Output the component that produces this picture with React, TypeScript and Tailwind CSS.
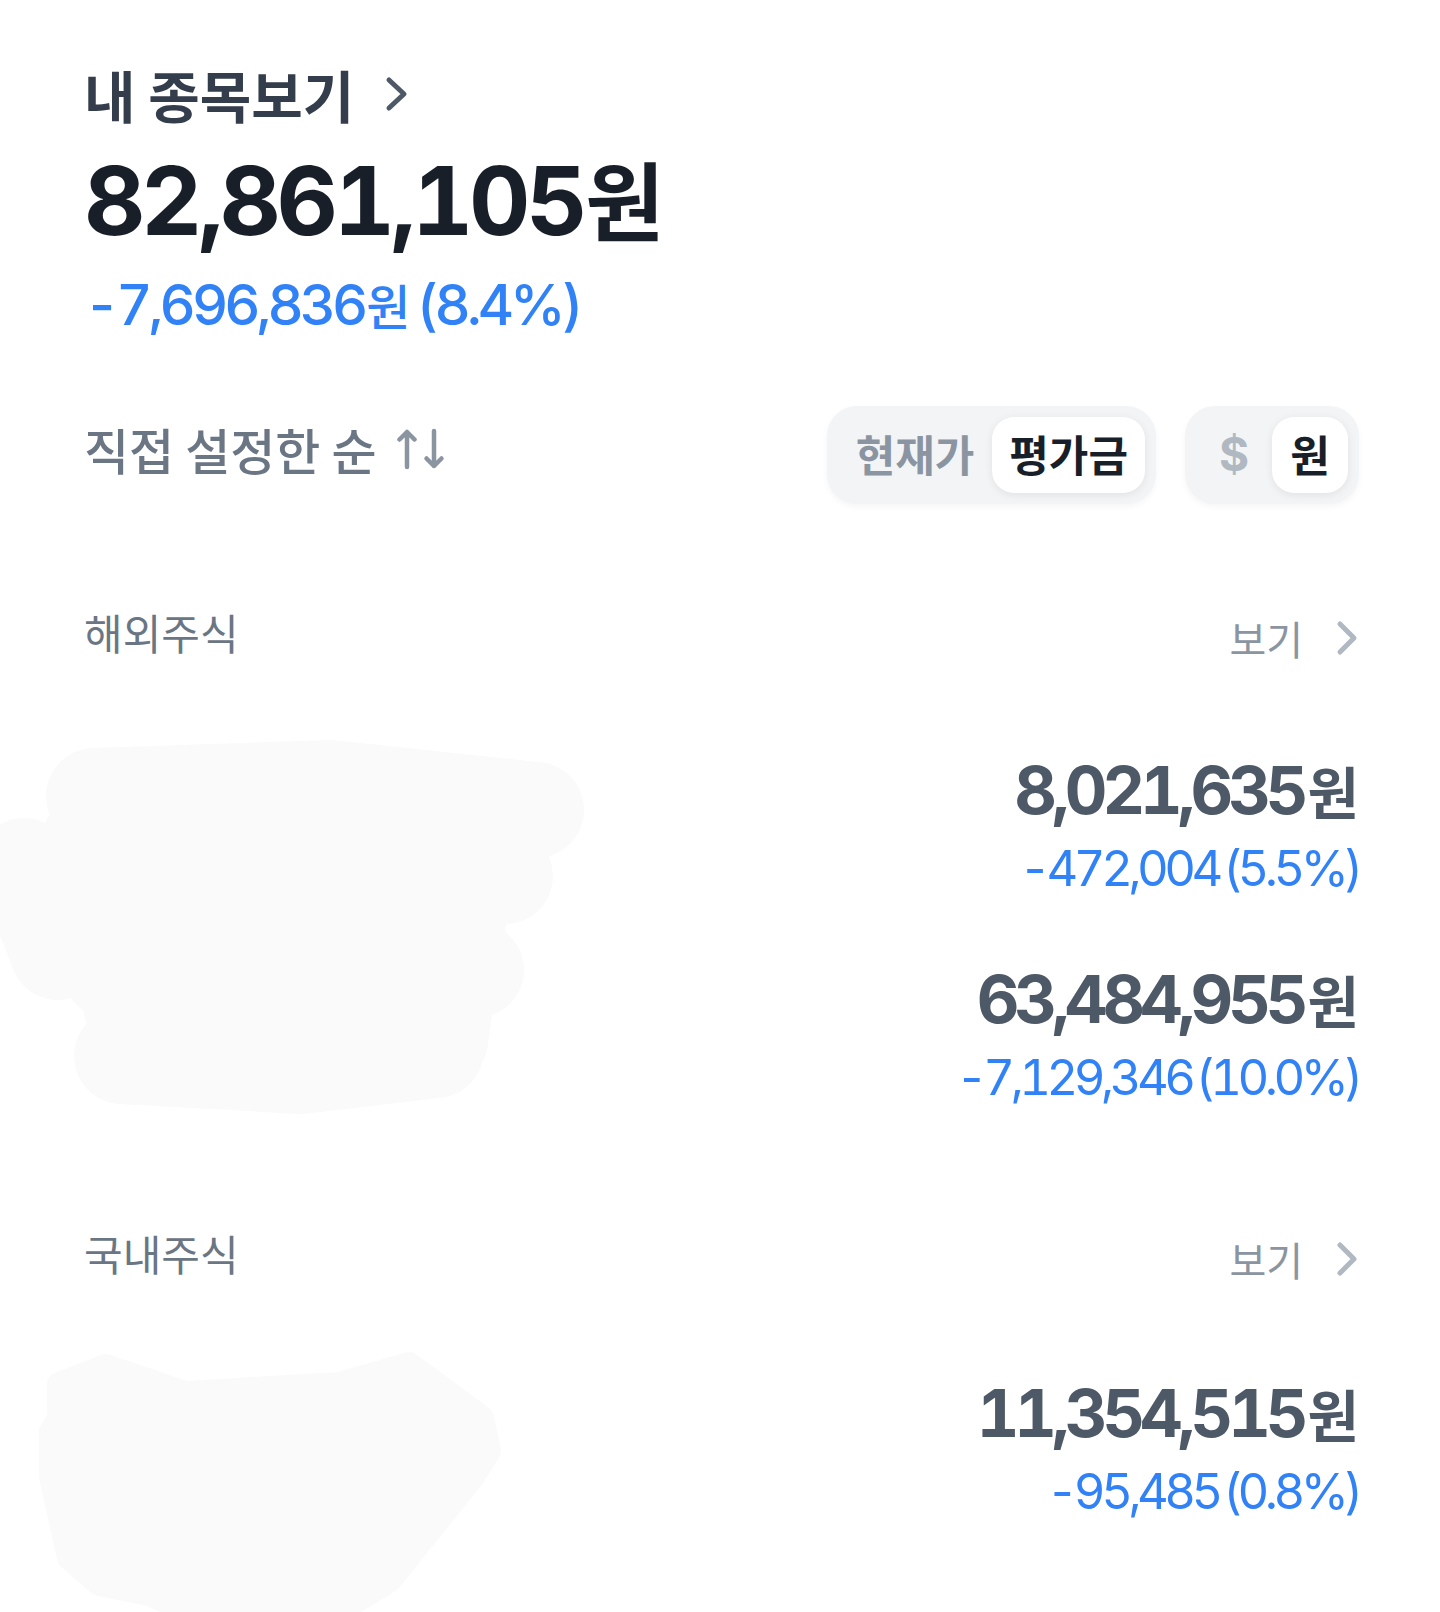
import React from "react";

const num = "font-['Inter','Noto_Sans_CJK_KR',sans-serif] tabular-nums";
const kr = "font-['Noto_Sans_CJK_KR','Noto_Sans',sans-serif]";

function Chevron({ className }: { className?: string }) {
  return (
    <svg
      viewBox="0 0 24 38"
      className={className}
      fill="none"
      stroke="currentColor"
      strokeWidth={5}
      strokeLinecap="round"
      strokeLinejoin="round"
    >
      <path d="M5 5 L19 19 L5 33" />
    </svg>
  );
}

function SortArrows() {
  return (
    <svg
      viewBox="0 0 48 42"
      className="h-[42px] w-[48px] text-[#8b95a1]"
      fill="none"
      stroke="currentColor"
      strokeWidth={4.5}
      strokeLinecap="round"
      strokeLinejoin="round"
    >
      <path d="M10 39 V4 M2.5 11.5 L10 4 L17.5 11.5" />
      <path d="M37 3 V38 M29.5 30.5 L37 38 L44.5 30.5" />
    </svg>
  );
}

// redaction scribbles over the stock names
function ScribbleTop() {
  return (
    <svg
      viewBox="0 0 600 400"
      className="pointer-events-none absolute left-0 top-[740px] h-[400px] w-[600px]"
      fill="none"
      stroke="#fafafa"
      strokeWidth={96}
      strokeLinecap="round"
      strokeLinejoin="round"
    >
      <path d="M90 100 L470 100 L440 300 L140 300 Z" fill="#fafafa" />
      <path d="M94 56 L330 48 L536 70" />
      <path d="M74 140 L300 132 L505 136" />
      <path d="M24 126 L58 212" />
      <path d="M112 232 L330 222 L476 230" />
      <path d="M122 316 L300 326 L436 310" />
    </svg>
  );
}

function ScribbleBottom() {
  return (
    <svg
      viewBox="0 0 480 272"
      className="pointer-events-none absolute left-[39px] top-[1351px] h-[272px] w-[480px]"
    >
      <path
        d="M20 33 L67 15 L147 42 L300 33 L370 13 L400 35 L443 67 L450 100 L433 127 L350 230 L317 250 L257 250 L233 270 L173 270 L110 243 L60 233 L30 207 L10 117 L7 90 L20 67 Z"
        fill="#fafafa"
        stroke="#fafafa"
        strokeWidth={24}
        strokeLinejoin="round"
      />
    </svg>
  );
}

function SectionHeader({ label }: { label: string }) {
  return (
    <div className="flex h-[56px] items-start justify-between">
      <span className={`${kr} text-[42px] leading-[56px] text-[#6b7684]`}>{label}</span>
      <div className="mt-[6px] flex items-center gap-[32px]">
        <span className={`${kr} text-[40px] leading-[56px] text-[#8b95a1]`}>보기</span>
        <Chevron className="h-[38px] w-[24px] text-[#b0b8c1]" />
      </div>
    </div>
  );
}

function Holding({ value, change, rate }: { value: string; change: string; rate: string }) {
  return (
    <div className="flex flex-col items-end">
      <div className={`${num} text-[66px] font-bold leading-[76px] tracking-[-5px] text-[#4e5968]`}>
        {value}
        <span className={`${kr} ml-[4px] text-[56px] tracking-normal`}>원</span>
      </div>
      <div className={`${num} mt-[11px] text-[49px] leading-[60px] tracking-[-4.5px] text-[#3182f6]`}>
        {change}
        <span className="ml-[4px]">({rate})</span>
      </div>
    </div>
  );
}

export default function App() {
  return (
    <div className="relative min-h-[1612px] w-full overflow-hidden bg-white pl-[84px] pr-[81px] pt-[64px]">
      <ScribbleTop />
      <ScribbleBottom />

      <div className="relative">
        {/* header */}
        <div className="flex h-[60px] items-center gap-[30px]">
          <span className={`${kr} text-[56px] font-bold leading-[60px] text-[#333d4b]`}>내 종목보기</span>
          <svg
            viewBox="0 0 25 36"
            className="h-[36px] w-[25px] text-[#4e5968]"
            fill="none"
            stroke="currentColor"
            strokeWidth={5}
            strokeLinecap="round"
            strokeLinejoin="round"
          >
            <path d="M5 4 L20 18 L5 32" />
          </svg>
        </div>

        <div className={`${num} mt-[19px] text-[95px] font-bold leading-[110px] tracking-[-4.3px] text-[#191f28]`}>
          82,861,105<span className={`${kr} ml-[2px] text-[86px] tracking-normal`}>원</span>
        </div>
        <div className={`${num} mt-[16px] text-[56px] font-medium leading-[64px] tracking-[-4px] text-[#3182f6]`}>
          -7,696,836<span className={`${kr} ml-[2px] text-[48px] tracking-normal`}>원</span>
          <span className="ml-[6px]">(8.4%)</span>
        </div>

        {/* sort + toggles */}
        <div className="mt-[69px] flex h-[98px] items-center justify-between">
          <div className="-mt-[12px] flex items-center gap-[20px]">
            <span className={`${kr} text-[49px] font-medium leading-[60px] text-[#6b7684]`}>직접 설정한 순</span>
            <SortArrows />
          </div>
          <div className="flex items-center gap-[29px]">
            <div className="flex rounded-[30px] bg-[#f2f4f6] p-[11px] shadow-[0_3px_6px_rgba(0,0,0,0.04)]">
              <div className={`${kr} flex h-[76px] items-center px-[18px] pb-[4px] text-[43px] font-bold text-[#8b95a1]`}>
                현재가
              </div>
              <div
                className={`${kr} flex h-[76px] items-center rounded-[22px] bg-white px-[17px] pb-[4px] text-[43px] font-bold text-[#191f28] shadow-[0_2px_8px_rgba(0,0,0,0.08)]`}
              >
                평가금
              </div>
            </div>
            <div className="flex rounded-[30px] bg-[#f2f4f6] p-[11px] shadow-[0_3px_6px_rgba(0,0,0,0.04)]">
              <div className={`${num} flex h-[76px] w-[76px] items-center justify-center pb-[2px] text-[46px] font-bold text-[#b0b8c1]`}>
                $
              </div>
              <div
                className={`${kr} flex h-[76px] w-[76px] items-center justify-center rounded-[22px] bg-white pb-[4px] text-[43px] font-bold text-[#191f28] shadow-[0_2px_8px_rgba(0,0,0,0.08)]`}
              >
                원
              </div>
            </div>
          </div>
        </div>

        {/* 해외주식 */}
        <div className="mt-[100px]">
          <SectionHeader label="해외주식" />
          <div className="mt-[92px] flex flex-col gap-[62px]">
            <Holding value="8,021,635" change="-472,004" rate="5.5%" />
            <Holding value="63,484,955" change="-7,129,346" rate="10.0%" />
          </div>
        </div>

        {/* 국내주식 */}
        <div className="mt-[117px]">
          <SectionHeader label="국내주식" />
          <div className="mt-[94px] flex flex-col">
            <Holding value="11,354,515" change="-95,485" rate="0.8%" />
          </div>
        </div>
      </div>
    </div>
  );
}
